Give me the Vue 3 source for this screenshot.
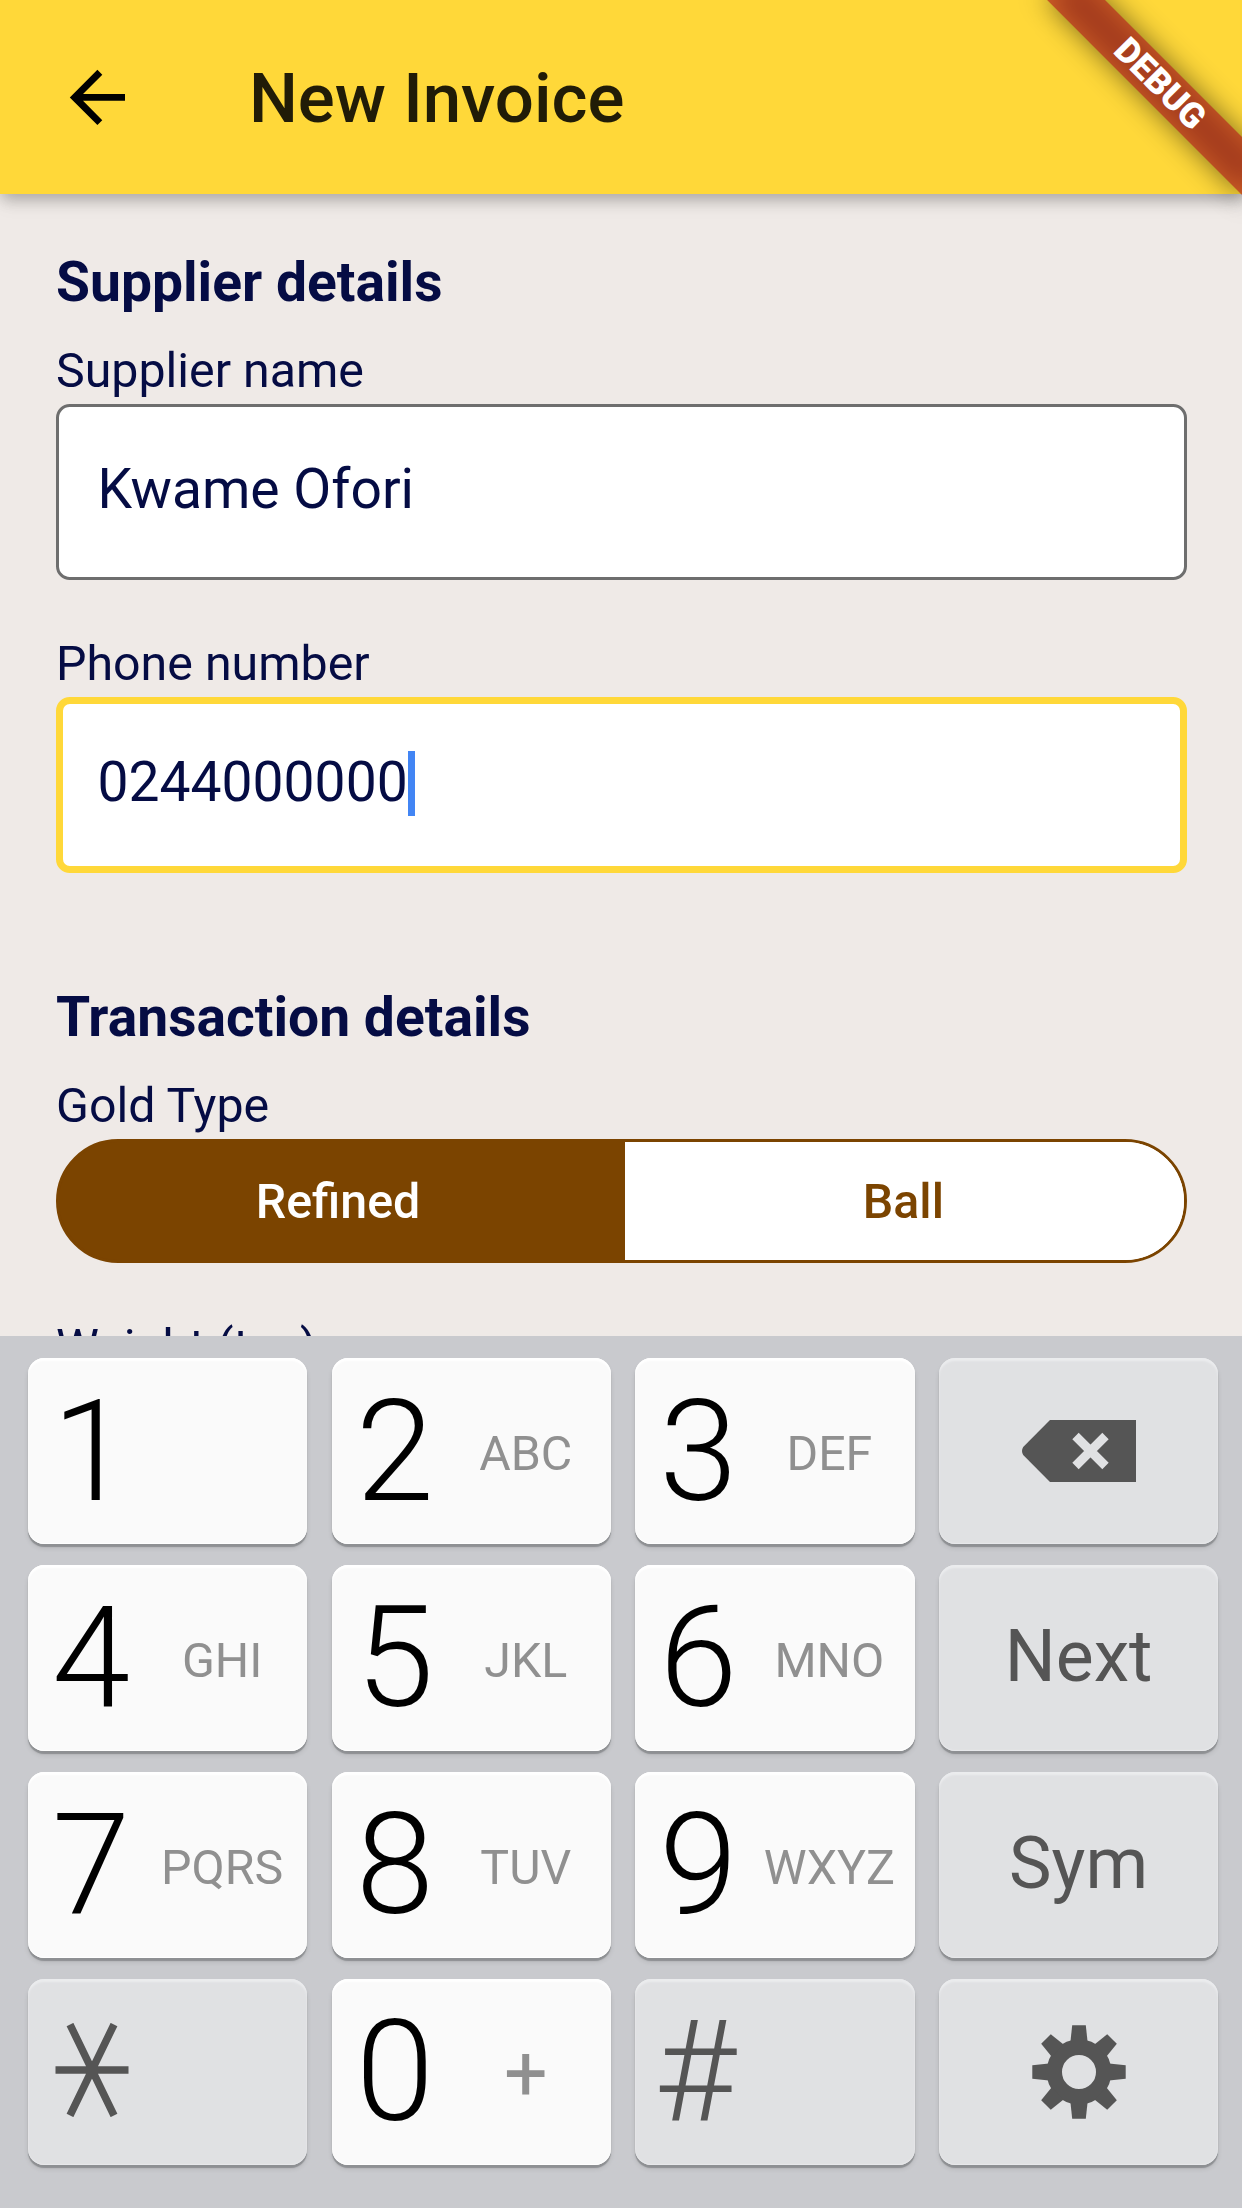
<script setup>
import { ref } from 'vue'

const supplier = ref('Kwame Ofori')
const phone = ref('0244000000')
const goldTypes = ['Refined', 'Ball']
const goldType = ref('Refined')

const keys = [
  { main: '1' },
  { main: '2', sub: 'ABC' },
  { main: '3', sub: 'DEF' },
  { icon: 'backspace', fn: true },
  { main: '4', sub: 'GHI' },
  { main: '5', sub: 'JKL' },
  { main: '6', sub: 'MNO' },
  { action: 'Next', fn: true },
  { main: '7', sub: 'PQRS' },
  { main: '8', sub: 'TUV' },
  { main: '9', sub: 'WXYZ' },
  { action: 'Sym', fn: true },
  { icon: 'star', fn: true },
  { main: '0', sub: '+', plus: true },
  { main: '#', fn: true },
  { icon: 'gear', fn: true },
]
const teeth = [0, 45, 90, 135, 180, 225, 270, 315]
</script>

<template>
  <div class="screen">
    <header class="appbar">
      <svg class="back" viewBox="0 0 24 24">
        <path d="M20 11H7.83l5.59-5.59L12 4l-8 8 8 8 1.41-1.41L7.83 13H20v-2z" />
      </svg>
      <h1 class="title">New Invoice</h1>
    </header>

    <main class="form">
      <h2 class="section">Supplier details</h2>
      <div class="group">
        <div class="label">Supplier name</div>
        <div class="field">{{ supplier }}</div>
      </div>
      <div class="group">
        <div class="label">Phone number</div>
        <div class="field focused">{{ phone }}<span class="caret"></span></div>
      </div>

      <h2 class="section second">Transaction details</h2>
      <div class="group">
        <div class="label">Gold Type</div>
        <div class="toggle">
          <div
            v-for="t in goldTypes"
            :key="t"
            class="option"
            :class="{ selected: t === goldType }"
            @click="goldType = t"
          >{{ t }}</div>
        </div>
      </div>
      <div class="group">
        <div class="label">Weight (toz)</div>
      </div>
    </main>

    <section class="keyboard">
      <div v-for="(k, i) in keys" :key="i" class="key" :class="{ fn: k.fn }">
        <template v-if="k.main">
          <span class="main">{{ k.main }}</span>
          <span v-if="k.sub" class="sub" :class="{ plus: k.plus }">{{ k.sub }}</span>
        </template>
        <span v-else-if="k.action" class="action">{{ k.action }}</span>
        <svg v-else-if="k.icon === 'backspace'" class="icon backspace" viewBox="0 0 114 62">
          <path class="fill" d="M28 0H114V62H28L1.2 35Q-1.2 31 1.2 27Z" />
          <path class="cross" d="M53.5 16L83.5 46M83.5 16L53.5 46" />
        </svg>
        <svg v-else-if="k.icon === 'star'" class="star" viewBox="0 0 74 94">
          <path d="M0.5 47H73.5M15 1.5L59 92.5M59 1.5L15 92.5" />
        </svg>
        <svg v-else class="icon gear" viewBox="-47 -47 94 94">
          <circle r="24.7" />
          <path
            v-for="a in teeth"
            :key="a"
            d="M-6.8-46.7H6.8L8.6-30H-8.6Z"
            :transform="`rotate(${a})`"
          />
        </svg>
      </div>
    </section>

    <div class="ribbon"><span class="ribbon-text">DEBUG</span></div>
  </div>
</template>

<style>
body {
  margin: 0;
}
</style>

<style scoped>
.screen {
  position: relative;
  display: flex;
  flex-direction: column;
  width: 1242px;
  height: 2208px;
  overflow: hidden;
  background: #efeae7;
  color: #050c44;
  font-family: Roboto, "Liberation Sans", sans-serif;
}
.appbar {
  position: relative;
  display: flex;
  flex: none;
  align-items: center;
  box-sizing: border-box;
  height: 193.6px;
  padding-left: 55.5px;
  background: #ffd839;
  box-shadow: 0 7px 14px -3px rgba(0, 0, 0, 0.2), 0 14px 17px rgba(0, 0, 0, 0.035),
    0 3px 18px rgba(0, 0, 0, 0.12);
}
.back {
  width: 82.8px;
  height: 82.8px;
  margin-top: 1px;
  fill: #000;
}
.title {
  margin: 4px 0 0 110.6px;
  color: rgba(0, 0, 0, 0.87);
  font-size: 69px;
  font-weight: 500;
  line-height: 81px;
}
.form {
  flex: none;
  box-sizing: border-box;
  height: 1142px;
  padding: 56.2px 55.2px 0 56px;
  overflow: hidden;
}
.section {
  margin: 0 0 28.4px;
  font-size: 55.2px;
  font-weight: 700;
  line-height: 64.8px;
}
.group + .group {
  margin-top: 55.4px;
}
.second {
  margin-top: 111.6px;
}
.label {
  margin-bottom: 4.7px;
  font-size: 48.3px;
  line-height: 56.6px;
}
.field {
  display: flex;
  box-sizing: border-box;
  height: 176px;
  padding: 49.6px 38.5px 0;
  border: 3px solid #6e6e6e;
  border-radius: 13.8px;
  background: #fff;
  font-size: 55.2px;
  line-height: 64.8px;
}
.focused {
  padding: 46.4px 34.5px 0;
  border: 7px solid #ffd839;
}
.caret {
  width: 7px;
  height: 65px;
  margin-top: 0.5px;
  background: #4285f4;
}
.toggle {
  display: flex;
  box-sizing: border-box;
  height: 124.2px;
  overflow: hidden;
  border: 3px solid #7b4400;
  border-radius: 62.1px;
  background: linear-gradient(90deg, #7b4400 50%, #fff 50%);
}
.option {
  flex: 1 1 0;
  box-sizing: border-box;
  padding-right: 2px;
  color: #7b4400;
  background: #fff;
  font-size: 48.3px;
  font-weight: 500;
  line-height: 120.4px;
  text-align: center;
}
.selected {
  flex: 0 0 566px;
  padding-right: 8px;
  color: #fff;
  background: #7b4400;
}
.keyboard {
  display: grid;
  flex: 1;
  grid-template-columns: repeat(4, 279.3px);
  grid-auto-rows: 186.8px;
  align-content: start;
  gap: 20.2px 24.3px;
  box-sizing: border-box;
  padding: 22px 0 0 28.2px;
  background: #c9cace;
}
.key {
  display: flex;
  align-items: center;
  border-radius: 16px;
  background: #fafafa;
  color: #000;
  box-shadow: inset 0 3px 2px #fff, inset 0 -1px 1px #fff, 0 3px 1px #8e9093,
    0 4px 5px rgba(0, 0, 0, 0.1);
}
.fn {
  background: #e0e1e3;
  color: #555;
  box-shadow: inset 0 3px 2px #ebecee, inset 0 -1px 1px #e8e9eb, 0 3px 1px #8e9093,
    0 4px 5px rgba(0, 0, 0, 0.1);
}
.main {
  width: 126px;
  font-size: 141px;
  font-weight: 300;
  line-height: 187px;
  text-align: center;
}
.fn .main {
  width: 119px;
}
.sub {
  display: flex;
  justify-content: center;
  width: 136px;
  padding-top: 5px;
  color: #909090;
  font-size: 48.3px;
  line-height: 57px;
}
.plus {
  padding-top: 6px;
  font-size: 77px;
}
.action {
  flex: 1;
  font-size: 71.5px;
  line-height: 84px;
  padding-bottom: 1px;
  text-align: center;
}
.icon {
  margin: 0 auto;
  fill: #555;
}
.backspace {
  width: 114px;
  height: 62px;
}
.cross {
  stroke: #e0e1e3;
  stroke-width: 9;
}
.star {
  width: 74px;
  height: 94px;
  margin: -3px 0 0 27px;
  fill: none;
  stroke: #555;
  stroke-width: 7.5;
}
.gear {
  width: 94px;
  height: 94px;
}
.gear circle {
  fill: none;
  stroke: #555;
  stroke-width: 15.4;
}
.ribbon {
  position: absolute;
  top: 96.6px;
  left: 1104px;
  display: flex;
  align-items: center;
  justify-content: center;
  width: 276px;
  height: 41.4px;
  transform: rotate(45deg);
  transform-origin: 138px -96.6px;
}
.ribbon::before,
.ribbon::after {
  position: absolute;
  inset: 0;
  content: "";
}
.ribbon::before {
  background: rgba(0, 0, 0, 0.5);
  filter: blur(13.7px);
}
.ribbon::after {
  background: rgba(183, 28, 28, 0.627);
}
.ribbon-text {
  position: relative;
  z-index: 1;
  padding-left: 2px;
  color: #fff;
  font-size: 35.2px;
  font-weight: 900;
  line-height: 35.2px;
}
</style>
